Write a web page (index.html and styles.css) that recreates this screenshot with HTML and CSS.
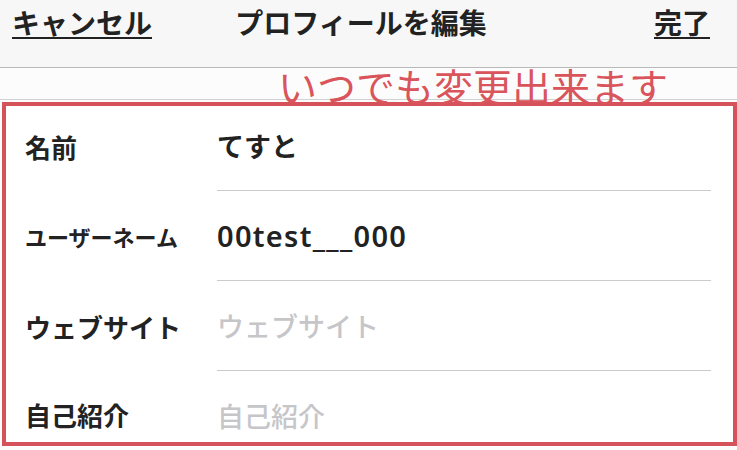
FILE: index.html
```html
<!DOCTYPE html>
<html lang="ja">
<head>
  <meta charset="UTF-8">
  <meta name="viewport" content="width=device-width, initial-scale=1.0">
  <title>プロフィールを編集</title>
  <link rel="stylesheet" href="styles.css">
</head>
<body>
  <header class="nav-bar">
    <a class="nav-link nav-cancel" href="#">キャンセル</a>
    <h1 class="nav-title">プロフィールを編集</h1>
    <a class="nav-link nav-done" href="#">完了</a>
  </header>

  <div class="note-strip">
    <p class="note">いつでも変更出来ます</p>
  </div>

  <section class="profile-box">
    <form class="profile-form">
      <div class="field">
        <label class="field-label" for="name">名前</label>
        <div class="field-value">
          <input type="text" id="name" value="てすと">
        </div>
      </div>
      <div class="field">
        <label class="field-label field-label-small" for="username">ユーザーネーム</label>
        <div class="field-value">
          <input type="text" id="username" class="input-latin" value="00test___000">
        </div>
      </div>
      <div class="field">
        <label class="field-label" for="website">ウェブサイト</label>
        <div class="field-value">
          <input type="text" id="website" placeholder="ウェブサイト">
        </div>
      </div>
      <div class="field field-bio">
        <label class="field-label" for="bio">自己紹介</label>
        <div class="field-value">
          <input type="text" id="bio" placeholder="自己紹介">
        </div>
      </div>
    </form>
  </section>
</body>
</html>
```

FILE: styles.css
```css
/* Basic reset */
* {
  margin: 0;
  padding: 0;
  box-sizing: border-box;
}
body {
  width: 737px;
  height: 450px;
  overflow: hidden;
  font-family: "Noto Sans CJK JP", "Noto Sans", sans-serif;
  background-color: #fcfcfc;
  color: #222;
}

/* Top navigation */
.nav-bar {
  display: grid;
  grid-template-columns: 1fr auto 1fr;
  align-items: start;
  height: 68px;
  padding: 8px 27px 0 12px;
  background-color: #f7f7f7;
  border-bottom: 1px solid #b9b9b9;
}
.nav-link,
.nav-title {
  font-size: 28px;
  line-height: 1;
  font-weight: 600;
  color: #222;
}
.nav-link {
  text-decoration: underline;
  text-decoration-thickness: 2px;
  text-underline-offset: 3px;
}
.nav-done {
  justify-self: end;
}

/* Annotation strip */
.note-strip {
  position: relative;
  height: 32px;
  border-bottom: 1px solid #d2d2d2;
}
.note {
  position: absolute;
  left: 278px;
  top: -2px;
  font-size: 39px;
  line-height: 1;
  font-weight: 400;
  color: #d9545b;
  white-space: nowrap;
  z-index: 2;
}

/* Highlighted form */
.profile-box {
  height: 344px;
  margin: 2px 0 0 2px;
  border: 4px solid #d6525a;
  background-color: #fff;
  overflow: hidden;
}
.profile-form {
  margin-top: -5px;
  padding: 0 22px 0 19px;
}
.field {
  display: grid;
  grid-template-columns: 192px 1fr;
  height: 90px;
}
.field-label {
  display: flex;
  align-items: center;
  font-size: 26px;
  font-weight: 700;
  color: #222;
}
.field-label-small {
  font-size: 22px;
}
.field-value {
  display: flex;
  align-items: center;
  border-bottom: 1px solid #cbcbcb;
}
.field-value input {
  width: 100%;
  border: none;
  outline: none;
  background: transparent;
  font-family: inherit;
  font-size: 27px;
  font-weight: 600;
  color: #222;
}
.field-value .input-latin {
  font-family: "Noto Sans", "Noto Sans CJK JP", sans-serif;
  font-size: 29px;
  letter-spacing: 1.3px;
}
.field-value input::placeholder {
  color: #c6c6c9;
  font-weight: 500;
}
.field-bio .field-label,
.field-bio .field-value {
  align-items: flex-start;
  padding-top: 25px;
}
```
